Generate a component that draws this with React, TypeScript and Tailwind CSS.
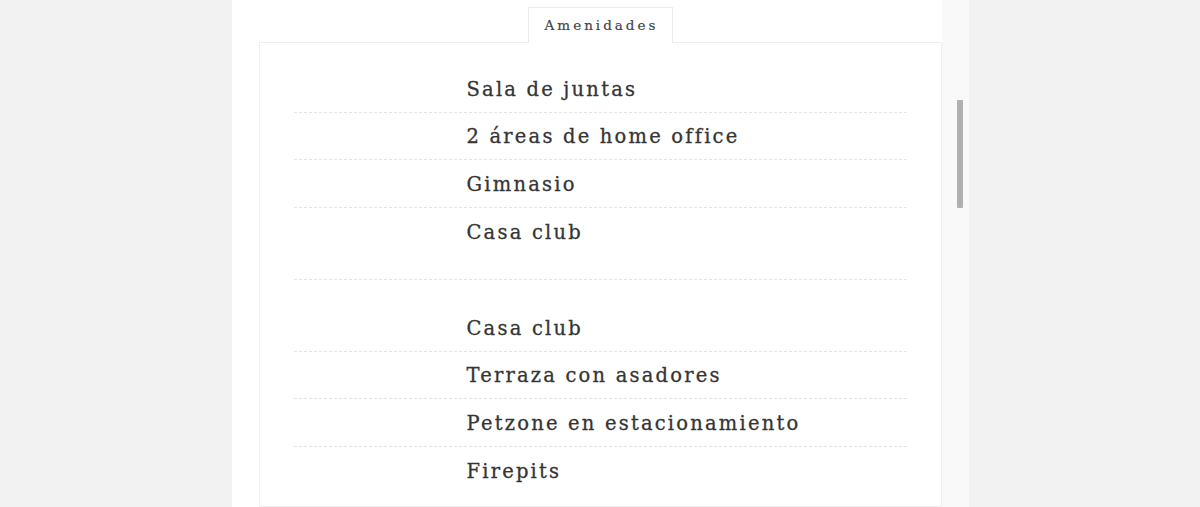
import React from "react";

const list1 = ["Sala de juntas", "2 áreas de home office", "Gimnasio", "Casa club"];
const list2 = ["Casa club", "Terraza con asadores", "Petzone en estacionamiento", "Firepits"];

function Row({ label, last }: { label: string; last: boolean }) {
  return (
    <div
      className={
        "h-[47.5px] flex items-center pl-[173px] " +
        (last ? "" : "border-b border-dashed border-[#e4e4e4]")
      }
    >
      <span className="text-[19.5px] tracking-[2.2px] text-[#353535] leading-none pt-[2px] [-webkit-text-stroke:0.3px_#353535]">
        {label}
      </span>
    </div>
  );
}

export default function App() {
  return (
    <div
      className="min-h-screen h-[507px] overflow-hidden bg-[#f2f2f2] flex justify-center"
      style={{ fontFamily: '"DejaVu Serif", "Liberation Serif", serif' }}
    >
      <div className="w-[737px] bg-white flex">
        <div className="w-[27px] shrink-0" />
        <div className="w-[683px] shrink-0 pt-[7px] flex flex-col">
          <div className="flex justify-center">
            <div className="w-[145px] h-[36px] -mb-px relative z-10 bg-white border border-b-0 border-[#ececec] flex items-center justify-center">
              <span className="text-[13.5px] tracking-[3px] text-[#444] leading-none pl-[3px] [-webkit-text-stroke:0.2px_#444]">
                Amenidades
              </span>
            </div>
          </div>
          <div className="flex-1 border border-[#efefef] px-[34px] pt-[22px]">
            <div>
              {list1.map((l, i) => (
                <Row key={"a" + i} label={l} last={i === list1.length - 1} />
              ))}
            </div>
            <div className="my-[24px] border-t border-dashed border-[#e4e4e4]" />
            <div>
              {list2.map((l, i) => (
                <Row key={"b" + i} label={l} last={i === list2.length - 1} />
              ))}
            </div>
          </div>
        </div>
        <div className="w-[27px] shrink-0 bg-[#f9f9f9] pt-[100px] pl-[15px]">
          <div className="w-[6px] h-[108px] bg-[#b0b0b0] rounded-[1px]" />
        </div>
      </div>
    </div>
  );
}
